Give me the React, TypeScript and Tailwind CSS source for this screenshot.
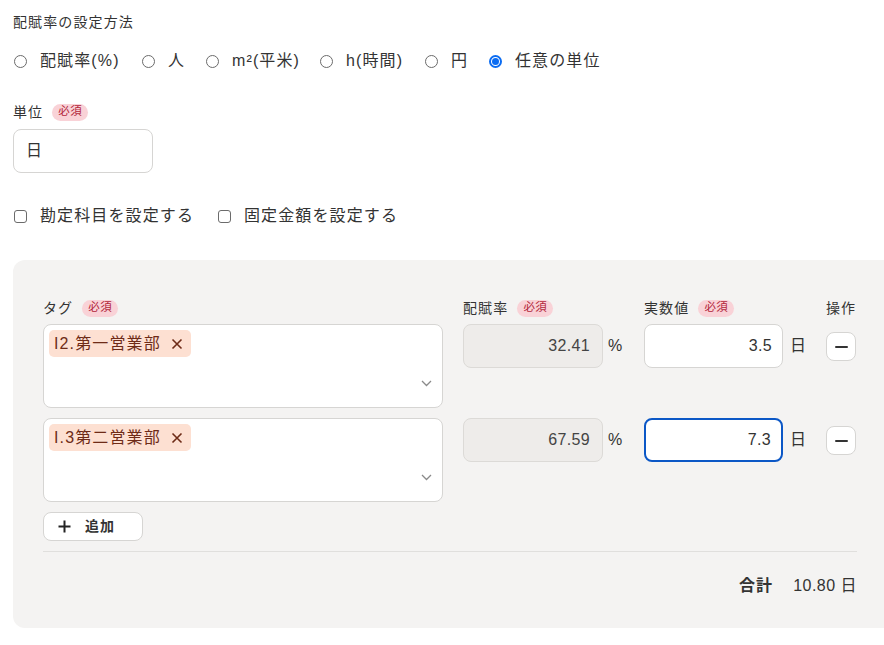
import React, { useState } from 'react';

const FONT = "font-['Liberation_Sans','Noto_Sans_CJK_JP',sans-serif]";

const Required: React.FC = () => (
  <span className="ml-[9px] inline-flex h-[17px] items-center rounded-full bg-[#f9d2d7] px-[6px] text-[11.5px] leading-none tracking-[0.04em] text-[#b3263b]">
    必須
  </span>
);

const Radio: React.FC<{ checked?: boolean; label: string }> = ({ checked, label }) => (
  <label className="flex items-center">
    {checked ? (
      <span className="flex h-[13px] w-[13px] items-center justify-center rounded-full border-[2px] border-[#0b6cf2]">
        <span className="h-[7px] w-[7px] rounded-full bg-[#0b6cf2]" />
      </span>
    ) : (
      <span className="h-[13px] w-[13px] rounded-full border border-[#6b6b6b] bg-white" />
    )}
    <span className="ml-[13px] text-[16px] text-[#333]">{label}</span>
  </label>
);

const Checkbox: React.FC<{ label: string }> = ({ label }) => (
  <label className="flex items-center">
    <span className="h-[13px] w-[13px] rounded-[3px] border border-[#6b6b6b] bg-white" />
    <span className="ml-[13px] text-[16px] text-[#333]">{label}</span>
  </label>
);

const TagSelect: React.FC<{ tag: string }> = ({ tag }) => (
  <div className="relative h-[84px] w-[400px] rounded-[8px] border border-[#d6d5d3] bg-white">
    <span className="absolute left-[5px] top-[5px] flex h-[27px] items-center rounded-[5px] bg-[#fde0d2] pl-[5px] pr-[8px] text-[16px] text-[#6e2b17]">
      {tag}
      <svg className="ml-[10px]" width="12" height="12" viewBox="0 0 12 12" fill="none" stroke="#6e2b17" strokeWidth="1.6">
        <path d="M1.5 1.5 L10.5 10.5 M10.5 1.5 L1.5 10.5" />
      </svg>
    </span>
    <svg className="absolute right-[10px] top-[55px]" width="11" height="7" viewBox="0 0 11 7" fill="none" stroke="#8a8a8a" strokeWidth="1.3">
      <path d="M1 1 L5.5 5.5 L10 1" />
    </svg>
  </div>
);

const MinusButton: React.FC = () => (
  <button className="flex h-[29px] w-[30px] items-center justify-center rounded-[8px] border border-[#d6d5d3] bg-white">
    <span className="h-[2px] w-[13px] rounded bg-[#333]" />
  </button>
);

interface Row {
  tag: string;
  rate: string;
  value: string;
  focused?: boolean;
}

const App: React.FC = () => {
  const [rows] = useState<Row[]>([
    { tag: 'I2.第一営業部', rate: '32.41', value: '3.5' },
    { tag: 'I.3第二営業部', rate: '67.59', value: '7.3', focused: true },
  ]);

  return (
    <div className={`min-h-screen bg-white ${FONT} tracking-[0.07em] text-[#333]`}>
      <div className="pt-[12px]">
        <div className="pl-[13px] text-[14px] leading-[20px]">配賦率の設定方法</div>
        <div className="mt-[18px] flex h-[22px] items-center pl-[14px]">
          <div className="w-[128px]"><Radio label="配賦率(%)" /></div>
          <div className="w-[64px]"><Radio label="人" /></div>
          <div className="w-[114px]"><Radio label="m²(平米)" /></div>
          <div className="w-[105px]"><Radio label="h(時間)" /></div>
          <div className="w-[64px]"><Radio label="円" /></div>
          <Radio checked label="任意の単位" />
        </div>

        <div className="mt-[30px] flex items-center pl-[13px] text-[14px] leading-[20px]">
          単位
          <Required />
        </div>
        <div className="ml-[13px] mt-[7px] flex h-[44px] w-[140px] items-center rounded-[8px] border border-[#d6d5d3] bg-white pl-[12px] text-[16px]">
          日
        </div>

        <div className="mt-[31px] flex items-center gap-[16px] pl-[14px]">
          <div className="w-[188px]"><Checkbox label="勘定科目を設定する" /></div>
          <Checkbox label="固定金額を設定する" />
        </div>

        <div className="ml-[13px] mt-[32px] rounded-l-[12px] bg-[#f4f3f2] pb-[30px] pl-[30px] pr-[27px] pt-[39px]">
          <div className="flex h-[18px] items-center text-[14px]">
            <div className="flex w-[420px] items-center">タグ<Required /></div>
            <div className="flex w-[181px] items-center">配賦率<Required /></div>
            <div className="flex w-[182px] items-center">実数値<Required /></div>
            <div>操作</div>
          </div>

          <div className="mt-[7px] flex flex-col gap-[10px]">
            {rows.map((r, i) => (
              <div key={i} className="flex items-start">
                <TagSelect tag={r.tag} />
                <div className="ml-[20px] flex w-[181px] items-center">
                  <div className="flex h-[44px] w-[140px] items-center justify-end rounded-[8px] border border-[#dcdad7] bg-[#eeecea] pr-[12px] text-[16px] tracking-[0.02em] text-[#444]">
                    {r.rate}
                  </div>
                  <span className="ml-[5px] text-[16px]">%</span>
                </div>
                <div className="flex w-[182px] items-center">
                  <div
                    className={`flex h-[44px] w-[139px] items-center justify-end rounded-[8px] bg-white pr-[10px] text-[16px] tracking-[0.02em] ${
                      r.focused ? 'border-[2px] border-[#0b57c6]' : 'border border-[#d6d5d3]'
                    }`}
                  >
                    {r.value}
                  </div>
                  <span className="ml-[7px] text-[16px]">日</span>
                </div>
                <div className="pt-[8px]">
                  <MinusButton />
                </div>
              </div>
            ))}
          </div>

          <button className="mt-[10px] flex h-[29px] w-[100px] items-center rounded-[8px] border border-[#d6d5d3] bg-white pl-[14px] text-[14px] font-bold">
            <svg width="13" height="13" viewBox="0 0 13 13" fill="none" stroke="#222" strokeWidth="2">
              <path d="M6.5 0.5 V12.5 M0.5 6.5 H12.5" />
            </svg>
            <span className="ml-[14px]">追加</span>
          </button>

          <div className="mt-[10px] h-px w-[814px] bg-[#e0dfdd]" />

          <div className="mt-[22px] flex w-[814px] items-center justify-end text-[16px]">
            <span className="font-bold">合計</span>
            <span className="ml-[20px] tracking-[0.03em]">10.80 日</span>
          </div>
        </div>
      </div>
    </div>
  );
};

export default App;
